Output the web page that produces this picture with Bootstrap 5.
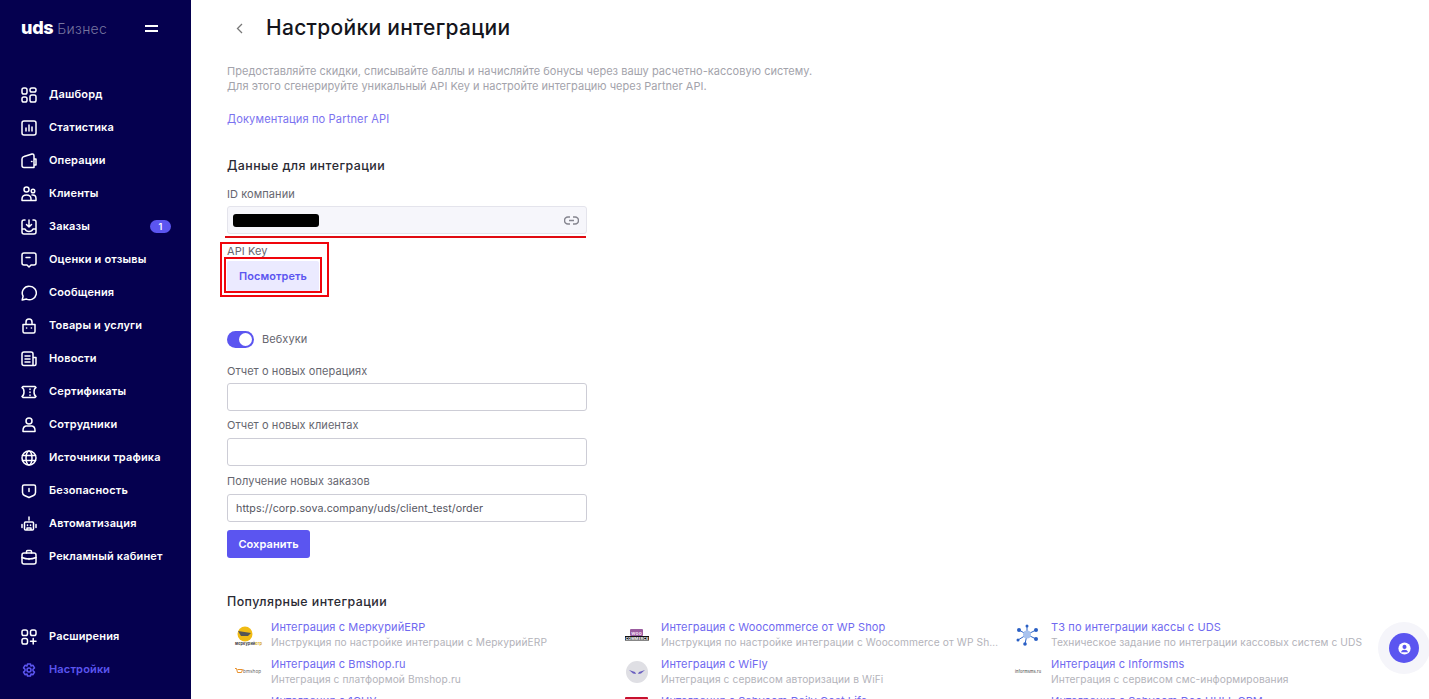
<!DOCTYPE html>
<html lang="ru"><head><meta charset="utf-8"><title>Настройки интеграции</title>
<link href="https://cdn.jsdelivr.net/npm/bootstrap@5.3.0/dist/css/bootstrap.min.css" rel="stylesheet">
<style>
html,body{height:100%;overflow:hidden}
body{font-family:Inter,"Noto Sans",sans-serif;background:#fff;color:#55555f;font-size:11px;letter-spacing:.12px}
.shell{height:699px;overflow:hidden}
.side{width:191px;background:#05004f;flex:none;padding:0 0 13px 0}
.brand{height:56px;padding:0 0 0 21px;color:#fff}
.brand b{font-size:18px;font-weight:800;letter-spacing:-.3px;line-height:1}
.brand span{font-size:14px;font-weight:300;color:#77759f;margin-left:4px;letter-spacing:.3px}
.burger{width:13px;height:7px;border-top:2px solid #fff;border-bottom:2px solid #fff;margin-left:auto;margin-right:33px}
.menu{margin-top:22px}
.nav-link.item{height:33px;padding:0 0 0 21px;color:#fff;font-weight:600;font-size:11px;letter-spacing:.16px;display:flex;align-items:center}
.item svg{width:16px;height:16px;margin-right:12px;flex:none;fill:none;stroke:currentColor;stroke-width:1.5;stroke-linecap:round;stroke-linejoin:round}
.nav-link.item.on{color:#5b55f0}
.count{margin-left:auto;margin-right:20px;width:21px;height:13px;border-radius:7px;background:#5b55f0;color:#fff;font-size:9px;line-height:13px;text-align:center}
.main{flex:1;padding:0 0 0 36px;min-width:0}
.head{height:56px;margin-left:9px}
.head svg{width:8px;height:11px;fill:none;stroke:#777;stroke-width:1.3;margin-right:22px}
h1.ttl{font-size:21px;font-weight:500;color:#15151c;margin:0;letter-spacing:.3px}
.intro{color:#a3a3ab;font-size:11px;line-height:15px;margin:8px 0 0;letter-spacing:.03px}
.doc{display:block;color:#7b72f0;text-decoration:none;margin-top:17px;line-height:16px;font-size:11.1px}
.sec{font-size:12.4px;font-weight:500;color:#2a2a33;margin:0;line-height:16px;letter-spacing:.45px}
.frm{width:360px}
.lbl{color:#66666f;line-height:15px;display:block;font-size:11px;margin:0 0 5px;letter-spacing:.08px}
.form-control.fld{height:28px;min-height:28px;padding:0 8px;font-size:10.7px;border-color:#cdcdd6;border-radius:3px;color:#55555f;letter-spacing:.08px}
.idbox{background:#f6f6fb;border:1px solid #e4e4ec;height:28px;border-radius:3px;padding:0 7px 0 5px}
.mask{width:86px;height:13px;background:#000;border-radius:3px}
.idbox svg{width:15px;height:9px;fill:none;stroke:#85858f;stroke-width:1.5}
.btn.soft{background:#ebeaff;color:#5b55f0;border:0;font-size:10.9px;font-weight:600;height:30px;width:92px;padding:0;border-radius:2px;letter-spacing:.1px}
.btn.solid{background:#5b55f0;color:#fff;border:0;font-size:11px;font-weight:600;height:28px;width:83px;padding:0;border-radius:3px;letter-spacing:.08px}
.tog{width:27px;height:17px;border-radius:9px;background:#5b55f0;position:relative;flex:none}
.tog::after{content:"";position:absolute;right:2px;top:2px;width:13px;height:13px;background:#fff;border-radius:50%}
.mark-line{position:absolute;background:#e00b12;height:2px;left:225px;top:236px;width:361px}
.mark-box{position:absolute;border:2px solid #f0050c}
.grid-w{width:1170px;--bs-gutter-x:0}
.pop{height:37px;min-width:0}
.logo{width:44px;flex:none;height:37px;padding-left:8px}
.logo svg{width:24px;height:37px;display:block;overflow:visible}
.pop a{display:block;color:#7069f0;text-decoration:none;font-size:11px;line-height:15px;white-space:nowrap}
.pop small{display:block;color:#b3b3ba;font-size:10.2px;line-height:15px;max-width:339px;letter-spacing:.1px}
.fab{position:absolute;left:1378px;top:622px;width:52px;height:52px;border-radius:50%;background:#f5f5fa}
.fab i{width:30px;height:30px;border-radius:50%;background:#5b55f0}
.fab svg{width:13px;height:13px}
</style></head><body>
<div class="shell d-flex position-relative">
<aside class="side d-flex flex-column">
 <div class="brand d-flex align-items-center"><b>uds</b><span>Бизнес</span><div class="burger"></div></div>
 <nav class="nav flex-column menu">
  <a class="nav-link item" href="#"><svg viewBox="0 0 16 16"><rect x="1" y="1" width="5" height="6" rx="1.8"/><rect x="9" y="1" width="6" height="4" rx="1.8"/><rect x="1" y="10" width="5" height="5" rx="1.8"/><rect x="9" y="8" width="6" height="7" rx="1.8"/></svg>Дашборд</a>
  <a class="nav-link item" href="#"><svg viewBox="0 0 16 16"><rect x="1" y="1" width="14" height="14" rx="2"/><path d="M5 11V8M8 11V5M11 11V7"/></svg>Статистика</a>
  <a class="nav-link item" href="#"><svg viewBox="0 0 16 16"><path d="M1 6q0-2 2-2.500L11 1q2-.3 2 2V14.500H3q-2 0-2-2ZM13 6h2v6h-2"/><path d="M10.500 8.500h.5"/></svg>Операции</a>
  <a class="nav-link item" href="#"><svg viewBox="0 0 16 16"><circle cx="5.500" cy="3.500" r="2.500"/><circle cx="12" cy="5" r="1.800"/><path d="M1 14.500v-1.500q0-4 4.500-4t4.500 4v1.500ZM11 9q4-.5 4 3.500v2h-5"/></svg>Клиенты</a>
  <a class="nav-link item" href="#"><svg viewBox="0 0 16 16"><path d="M4 1H3q-2 0-2 2v10q0 2 2 2h10q2 0 2-2V3q0-2-2-2h-1M8 1v7M5.500 5.500 8 8l2.500-2.500M1 10h3q1 2.500 4 2.500t4-2.500h3"/></svg>Заказы<span class="count">1</span></a>
  <a class="nav-link item" href="#"><svg viewBox="0 0 16 16"><path d="M3 1h10q2 0 2 2v8q0 2-2 2h-3l-2 2-2-2H3q-2 0-2-2V3q0-2 2-2ZM5 5.500h4"/></svg>Оценки и отзывы</a>
  <a class="nav-link item" href="#"><svg viewBox="0 0 16 16"><path d="M8.500 1.200a6.800 6.800 0 1 1-3 12.900L1.200 15l.9-3.800A6.800 6.800 0 0 1 8.500 1.200Z"/></svg>Сообщения</a>
  <a class="nav-link item" href="#"><svg viewBox="0 0 16 16"><path d="M2 6.500h12v7q0 1.500-1.500 1.500h-9Q2 15 2 13.500ZM5 6.500V4a3 3 0 0 1 6 0v2.500M5.500 10h.2M10.300 10h.2"/></svg>Товары и услуги</a>
  <a class="nav-link item" href="#"><svg viewBox="0 0 16 16"><path d="M12 14.500H3q-2 0-2-2V3q0-2 2-2h7q2 0 2 2Zm0-8h3v6.500q0 1.500-1.500 1.500H12M4 5h5M4 8h5M4 11h5"/></svg>Новости</a>
  <a class="nav-link item" href="#"><svg viewBox="0 0 16 16"><path d="M2 2.500h12l1 1q-2 1-2 4.500t2 4.500l-1 1H2l-1-1q2-1 2-4.500T1 3.500ZM9 5v.5M9 8v.5M9 11v.5"/></svg>Сертификаты</a>
  <a class="nav-link item" href="#"><svg viewBox="0 0 16 16"><circle cx="8" cy="4" r="3"/><path d="M2 14.500v-1q0-4 3-4.500h6q3 .5 3 4.500v1Z"/></svg>Сотрудники</a>
  <a class="nav-link item" href="#"><svg viewBox="0 0 16 16"><circle cx="8" cy="8" r="7"/><ellipse cx="8" cy="8" rx="3" ry="7"/><path d="M1.500 5.500h13M1.500 10.500h13"/></svg>Источники трафика</a>
  <a class="nav-link item" href="#"><svg viewBox="0 0 16 16"><path d="M3 2h10q1.500 0 1.500 1.500v6q0 2-2 3L8 14.500 3.500 12.500q-2-1-2-3v-6Q1.500 2 3 2ZM8 5.500v3"/></svg>Безопасность</a>
  <a class="nav-link item" href="#"><svg viewBox="0 0 16 16"><path d="M8 1v3M4.500 6h7q1 0 1 1v6q0 1-1 1h-7q-1 0-1-1V7q0-1 1-1ZM1 8.500v3M15 8.500v3M6.500 9v.5M9.500 9v.5M6 14v-2h4v2"/></svg>Автоматизация</a>
  <a class="nav-link item" href="#"><svg viewBox="0 0 16 16"><rect x="1" y="4" width="14" height="11" rx="2"/><path d="M5.500 4V2.500q0-1 1-1h3q1 0 1 1V4M1 8.500q7 3 14 0M8 9.500v1"/></svg>Рекламный кабинет</a>
 </nav>
 <nav class="nav flex-column mt-auto">
  <a class="nav-link item" href="#"><svg viewBox="0 0 16 16"><rect x="1" y="1" width="5.500" height="5.500" rx="1.800"/><rect x="9.500" y="1" width="5.500" height="5.500" rx="1.800"/><rect x="1" y="9.500" width="5.500" height="5.500" rx="1.800"/><path d="M12.200 9.500v5.500M9.500 12.200H15"/></svg>Расширения</a>
  <a class="nav-link item on" href="#"><svg viewBox="0 0 16 16"><path d="M6.500 1h3l.5 2 2-.7 1.500 2.600-1.500 1.400v1.400l1.500 1.400-1.500 2.600-2-.7-.5 2h-3l-.5-2-2 .7L2.500 9.100 4 7.700V6.300L2.500 4.900 4 2.300l2 .7Z" transform="translate(0 1)"/><circle cx="8" cy="8" r="2"/></svg>Настройки</a>
 </nav>
</aside>
<main class="main">
 <div class="head d-flex align-items-center"><svg viewBox="0 0 8 11"><path d="M6 1 1.500 5.500 6 10"/></svg><h1 class="ttl">Настройки интеграции</h1></div>
 <p class="intro">Предоставляйте скидки, списывайте баллы и начисляйте бонусы через вашу расчетно-кассовую систему.<br>Для этого сгенерируйте уникальный API Key и настройте интеграцию через Partner API.</p>
 <a class="doc" href="#">Документация по Partner API</a>
 <h2 class="sec" style="margin-top:31px">Данные для интеграции</h2>
 <div class="frm">
  <label class="lbl" style="margin:13px 0 4px">ID компании</label>
  <div class="idbox d-flex align-items-center justify-content-between"><div class="mask"></div><svg viewBox="0 0 15 9"><path d="M6 1H4a3.500 3.500 0 0 0 0 7h2M9 1h2a3.500 3.500 0 0 1 0 7H9M5 4.500h5"/></svg></div>
  <label class="lbl" style="margin:10px 0 2px">API Key</label>
  <button class="btn soft">Посмотреть</button>
  <div class="d-flex align-items-center gap-2" style="margin-top:40px"><div class="tog"></div><span class="lbl m-0">Вебхуки</span></div>
  <label class="lbl" style="margin:16px 0 4px">Отчет о новых операциях</label>
  <input class="form-control fld" aria-label="Отчет о новых операциях">
  <label class="lbl" style="margin:7px 0 5px">Отчет о новых клиентах</label>
  <input class="form-control fld" aria-label="Отчет о новых клиентах">
  <label class="lbl" style="margin:8px 0 5px">Получение новых заказов</label>
  <input class="form-control fld" value="https://corp.sova.company/uds/client_test/order">
  <button class="btn solid" style="margin-top:8px">Сохранить</button>
 </div>
 <h2 class="sec" style="margin-top:36px">Популярные интеграции</h2>
 <div class="row grid-w" style="margin-top:10px">
  <div class="col-4 pop d-flex"><div class="logo"><svg viewBox="0 0 24 37"><circle cx="10" cy="14" r="7.500" fill="#f0bb14"/><path d="M3 11l13 2-3 3-7 0Z" fill="#555"/><text x="0" y="24.500" font-size="3.800" font-weight="700" fill="#444">меркурий<tspan fill="#d9a514">erp</tspan></text></svg></div><div><a href="#">Интеграция с МеркурийERP</a><small>Инструкция по настройке интеграции с МеркурийERP</small></div></div>
  <div class="col-4 pop d-flex"><div class="logo"><svg viewBox="0 0 24 37"><rect x="5" y="9" width="13" height="7" rx="1" fill="#9a5c9f"/><text x="11.500" y="14.500" font-size="5" font-weight="700" fill="#f1dff0" text-anchor="middle">woo</text><rect x="0" y="16" width="24" height="4.500" fill="#111"/><text x="12" y="19.800" font-size="3.700" font-weight="800" fill="#fff" text-anchor="middle">COMMERCE</text></svg></div><div class="min-w-0"><a href="#">Интеграция с Woocommerce от WP Shop</a><small class="text-truncate">Инструкция по настройке интеграции с Woocommerce от WP Shop</small></div></div>
  <div class="col-4 pop d-flex"><div class="logo"><svg viewBox="0 0 24 37"><g stroke="#2a63c9" stroke-width="1"><path d="M12 14.500 4 10M12 14.500 21 10M12 14.500 12 6M12 14.500 3 20M12 14.500 21 19M12 14.500 10 24"/></g><circle cx="12" cy="14.500" r="4" fill="#a9c3ee"/><g fill="#2a5fc4"><circle cx="4" cy="10" r="2"/><circle cx="21" cy="10" r="2"/><circle cx="12" cy="6" r="1.500"/><circle cx="3" cy="20" r="1.500"/><circle cx="21" cy="19" r="2"/><circle cx="10" cy="24" r="1.800"/></g></svg></div><div><a href="#">ТЗ по интеграции кассы с UDS</a><small>Техническое задание по интеграции кассовых систем с UDS</small></div></div>
  <div class="col-4 pop d-flex"><div class="logo"><svg viewBox="0 0 24 37"><path d="M0 11.500h1.500l1 4h4l1-3H2.500" fill="none" stroke="#e8912c" stroke-width="1"/><text x="8" y="16" font-size="4.600" fill="#666">bmshop</text></svg></div><div><a href="#">Интеграция с Bmshop.ru</a><small>Интеграция с платформой Bmshop.ru</small></div></div>
  <div class="col-4 pop d-flex"><div class="logo"><svg viewBox="0 0 24 37"><circle cx="12" cy="15" r="11" fill="#dfdfe4"/><path d="M4 13l6 2 1 2-3-.5ZM20 13l-6 2-1 2 3-.5Z" fill="#6a5fc0"/></svg></div><div><a href="#">Интеграция с WiFly</a><small>Интеграция с сервисом авторизации в WiFi</small></div></div>
  <div class="col-4 pop d-flex"><div class="logo"><svg viewBox="0 0 24 37"><text x="0" y="15.500" font-size="3.900" font-weight="500" fill="#555">informsms.ru</text></svg></div><div><a href="#">Интеграция с Informsms</a><small>Интеграция с сервисом смс-информирования</small></div></div>
  <div class="col-4 pop d-flex"><div class="logo"></div><div><a href="#">Интеграция с 1СНУ</a></div></div>
  <div class="col-4 pop d-flex"><div class="logo"><svg viewBox="0 0 24 37"><rect x="0" y="3" width="23" height="20" rx="1" fill="#c8102e"/></svg></div><div><a href="#">Интеграция с Sabycom Daily Cost Life</a></div></div>
  <div class="col-4 pop d-flex"><div class="logo"></div><div><a href="#">Интеграция с Sabycom Doc HULL CRM</a></div></div>
 </div>
</main>
<div class="mark-line"></div>
<div class="mark-box" style="left:220px;top:242px;width:109px;height:55px"></div>
<div class="mark-box" style="left:224px;top:257px;width:98px;height:36px"></div>
<div class="fab d-flex align-items-center justify-content-center"><i class="d-flex align-items-center justify-content-center"><svg viewBox="0 0 16 16"><circle cx="8" cy="8" r="7.500" fill="#fff"/><circle cx="8" cy="6" r="2.500" fill="#5b55f0"/><path d="M3.500 12.500q1-3 4.500-3t4.500 3Z" fill="#5b55f0"/></svg></i></div>
</div>
<script src="https://cdn.jsdelivr.net/npm/bootstrap@5.3.0/dist/js/bootstrap.bundle.min.js"></script>
</body></html>
